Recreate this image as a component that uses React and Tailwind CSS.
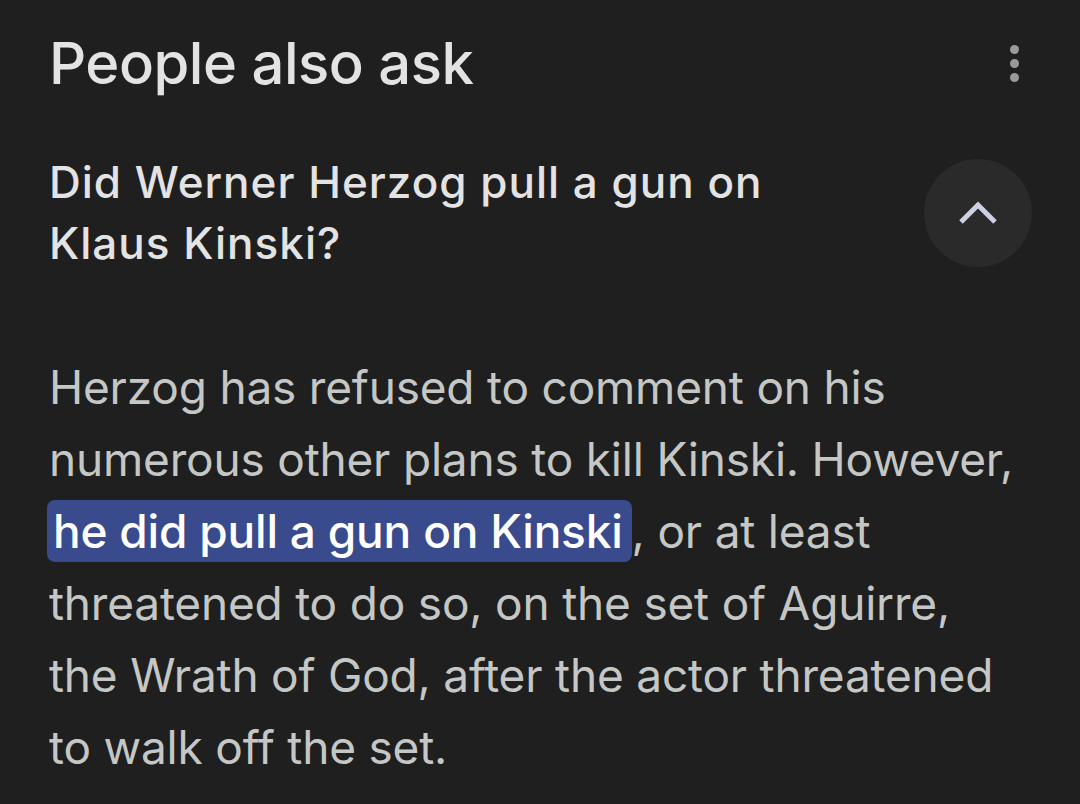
import React from "react";

export default function App() {
  const font = { fontFamily: "Inter, Roboto, sans-serif" };
  return (
    <div
      className="w-[1080px] h-[804px] overflow-hidden bg-[#1f1f1f] pl-[49px] pr-[48px]"
      style={font}
    >
      {/* Header */}
      <div className="flex items-start justify-between pt-[27px]">
        <h2 className="text-[58px] leading-[72px] font-[450] tracking-[-0.5px] text-[#e3e3e3]">
          People also ask
        </h2>
        <div className="-mt-[1px] pt-[19px] mr-[13px] flex flex-col gap-[5px]">
          <span className="block w-[9px] h-[9px] rounded-full bg-[#9a9a9a]" />
          <span className="block w-[9px] h-[9px] rounded-full bg-[#9a9a9a]" />
          <span className="block w-[9px] h-[9px] rounded-full bg-[#9a9a9a]" />
        </div>
      </div>

      {/* Question */}
      <div className="mt-[53px] flex items-start justify-between">
        <div className="text-[44px] leading-[61px] font-medium tracking-[1px] text-[#e3e3e3]">
          <div className="whitespace-nowrap">Did Werner Herzog pull a gun on</div>
          <div className="whitespace-nowrap">Klaus Kinski?</div>
        </div>
        <div className="mt-[7px] w-[108px] h-[108px] rounded-full bg-[#2a2a2a] flex items-center justify-center">
          <svg width="40" height="28" viewBox="0 0 40 28" className="-mt-[2px]">
            <polyline
              points="3,24 20,7 37,24"
              fill="none"
              stroke="#cdd0e2"
              strokeWidth="5"
              strokeLinejoin="miter"
            />
          </svg>
        </div>
      </div>

      {/* Answer */}
      <div className="mt-[77px] text-[46px] leading-[72px] tracking-[-0.2px] text-[#c4c7c5]">
        <div className="whitespace-nowrap">Herzog has refused to comment on his</div>
        <div className="whitespace-nowrap">numerous other plans to kill Kinski. However,</div>
        <div className="whitespace-nowrap">
          <span className="-ml-[2px] rounded-[8px] bg-[#394b8c] pl-[6px] pr-[9px] py-[3px] font-medium text-white">
            he did pull a gun on Kinski
          </span>
          , or at least
        </div>
        <div className="whitespace-nowrap">threatened to do so, on the set of Aguirre,</div>
        <div className="whitespace-nowrap">the Wrath of God, after the actor threatened</div>
        <div className="whitespace-nowrap">to walk off the set.</div>
      </div>
    </div>
  );
}
